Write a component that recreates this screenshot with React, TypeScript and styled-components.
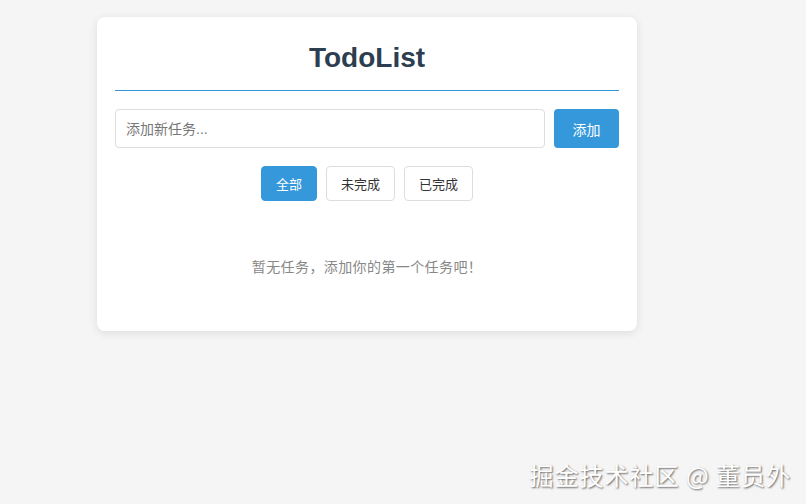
import React, { useState } from "react";
import styled, { createGlobalStyle } from "styled-components";

const Global = createGlobalStyle`
  html, body { margin: 0; padding: 0; background: #f5f5f5; }
  body {
    font-family: "Liberation Sans", Arial, "Noto Sans CJK SC", sans-serif;
    min-height: 504px;
  }
  * { box-sizing: border-box; }
`;

const Page = styled.div`
  position: relative;
  width: 806px;
  height: 504px;
  padding: 17px 0 0 97px;
`;

const Card = styled.div`
  width: 540px;
  background: #fff;
  border-radius: 8px;
  box-shadow: 0 2px 10px rgba(0, 0, 0, 0.1);
  padding: 25px 18px 18px;
`;

const Title = styled.h1`
  margin: 0 0 18px;
  padding-bottom: 16px;
  border-bottom: 1px solid #3498db;
  text-align: center;
  font-size: 28px;
  font-weight: bold;
  color: #2c3e50;
  line-height: 32px;
`;

const InputRow = styled.div`
  display: flex;
  gap: 9px;
  height: 39px;
`;

const TaskInput = styled.input`
  flex: 1;
  height: 39px;
  padding: 0 10px;
  border: 1px solid #ddd;
  border-radius: 4px;
  font-size: 14px;
  font-family: "Liberation Sans", "Noto Sans CJK SC", sans-serif;
  outline: none;
  &::placeholder { color: #777; }
`;

const AddButton = styled.button`
  width: 65px;
  height: 39px;
  border: none;
  border-radius: 4px;
  background: #3498db;
  color: #fff;
  font-size: 14px;
  font-family: "Liberation Sans", "Noto Sans CJK SC", sans-serif;
  cursor: pointer;
`;

const Filters = styled.div`
  display: flex;
  justify-content: center;
  gap: 9px;
  margin-top: 18px;
`;

const FilterButton = styled.button<{ $active?: boolean }>`
  height: 35px;
  padding: 0 14px;
  border: 1px solid ${(p) => (p.$active ? "#3498db" : "#ddd")};
  border-radius: 4px;
  background: ${(p) => (p.$active ? "#3498db" : "#fff")};
  color: ${(p) => (p.$active ? "#fff" : "#333")};
  font-size: 13px;
  font-family: "Liberation Sans", "Noto Sans CJK SC", sans-serif;
  cursor: pointer;
`;

const Empty = styled.div`
  margin-top: 20px;
  padding: 36px 0;
  text-align: center;
  color: #888;
  font-size: 14px;
  letter-spacing: 0.4px;
  line-height: 20px;
  font-family: "Liberation Sans", "Noto Sans CJK SC", sans-serif;
`;

const Watermark = styled.div`
  position: absolute;
  right: 15px;
  bottom: 12px;
  font-size: 24px;
  color: #fff;
  font-family: "Noto Sans CJK SC", sans-serif;
  text-shadow: 1px 1px 2px rgba(0, 0, 0, 0.6);
  letter-spacing: 1px;
`;

export default function App() {
  const [filter, setFilter] = useState("all");
  const filters = [
    { key: "all", label: "全部" },
    { key: "active", label: "未完成" },
    { key: "done", label: "已完成" },
  ];
  return (
    <Page>
      <Global />
      <Card>
        <Title>TodoList</Title>
        <InputRow>
          <TaskInput placeholder="添加新任务..." />
          <AddButton>添加</AddButton>
        </InputRow>
        <Filters>
          {filters.map((f) => (
            <FilterButton key={f.key} $active={filter === f.key} onClick={() => setFilter(f.key)}>
              {f.label}
            </FilterButton>
          ))}
        </Filters>
        <Empty>暂无任务，添加你的第一个任务吧！</Empty>
      </Card>
      <Watermark>掘金技术社区 @ 董员外</Watermark>
    </Page>
  );
}
